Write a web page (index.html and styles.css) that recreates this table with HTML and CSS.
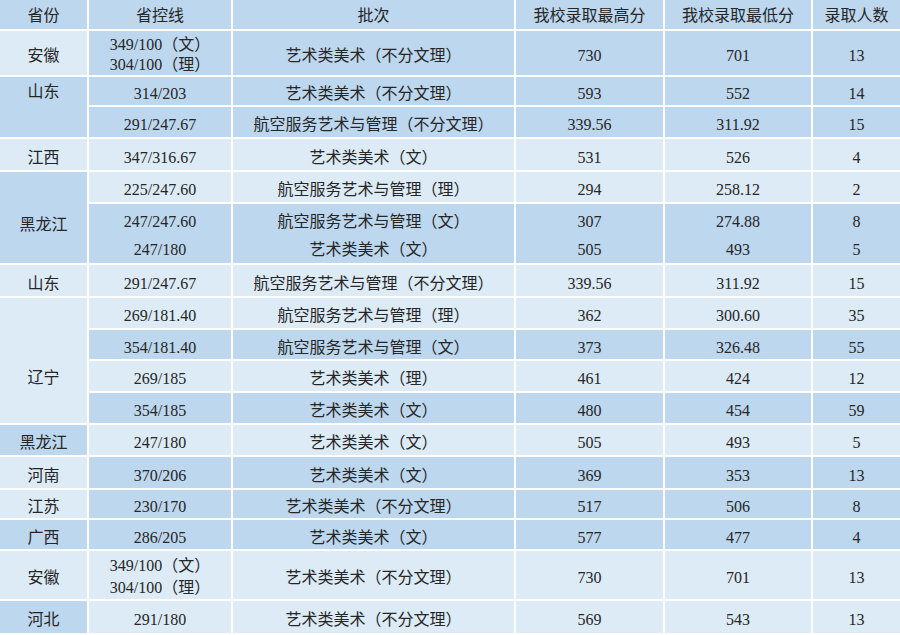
FILE: index.html
```html
<!DOCTYPE html>
<html lang="zh-CN">
<head>
<meta charset="utf-8">
<title>录取分数</title>
<link rel="stylesheet" href="styles.css">
</head>
<body>
<div class="frame">
<table class="scores">
<colgroup>
<col class="c-prov"><col class="c-line"><col class="c-batch"><col class="c-max"><col class="c-min"><col class="c-num">
</colgroup>
<thead>
<tr class="h31"><th>省份</th><th>省控线</th><th>批次</th><th>我校录取最高分</th><th>我校录取最低分</th><th>录取人数</th></tr>
</thead>
<tbody>
<tr class="h46"><td class="l">安徽</td><td class="m two">349/100（文）<br>304/100（理）</td><td class="m">艺术类美术（不分文理）</td><td class="m">730</td><td class="m">701</td><td class="m">13</td></tr>
<tr class="h30"><td class="m top sd" rowspan="2">山东</td><td class="m">314/203</td><td class="m">艺术类美术（不分文理）</td><td class="m">593</td><td class="m">552</td><td class="m">14</td></tr>
<tr class="h32"><td class="m">291/247.67</td><td class="m">航空服务艺术与管理（不分文理）</td><td class="m">339.56</td><td class="m">311.92</td><td class="m">15</td></tr>
<tr class="h33"><td class="l">江西</td><td class="l">347/316.67</td><td class="l">艺术类美术（文）</td><td class="l">531</td><td class="l">526</td><td class="l">4</td></tr>
<tr class="h32"><td class="m top hlj" rowspan="2">黑龙江</td><td class="l">225/247.60</td><td class="l">航空服务艺术与管理（理）</td><td class="l">294</td><td class="l">258.12</td><td class="l">2</td></tr>
<tr class="h61"><td class="m pair">247/247.60<br>247/180</td><td class="m pair">航空服务艺术与管理（文）<br>艺术类美术（文）</td><td class="m pair">307<br>505</td><td class="m pair">274.88<br>493</td><td class="m pair">8<br>5</td></tr>
<tr class="h33"><td class="l">山东</td><td class="l">291/247.67</td><td class="l">航空服务艺术与管理（不分文理）</td><td class="l">339.56</td><td class="l">311.92</td><td class="l">15</td></tr>
<tr class="h32"><td class="l top ln" rowspan="4">辽宁</td><td class="l">269/181.40</td><td class="l">航空服务艺术与管理（理）</td><td class="l">362</td><td class="l">300.60</td><td class="l">35</td></tr>
<tr class="h31"><td class="m">354/181.40</td><td class="m">航空服务艺术与管理（文）</td><td class="m">373</td><td class="m">326.48</td><td class="m">55</td></tr>
<tr class="h32"><td class="l">269/185</td><td class="l">艺术类美术（理）</td><td class="l">461</td><td class="l">424</td><td class="l">12</td></tr>
<tr class="h32"><td class="m">354/185</td><td class="m">艺术类美术（文）</td><td class="m">480</td><td class="m">454</td><td class="m">59</td></tr>
<tr class="h32"><td class="m">黑龙江</td><td class="l">247/180</td><td class="l">艺术类美术（文）</td><td class="l">505</td><td class="l">493</td><td class="l">5</td></tr>
<tr class="h33"><td class="l">河南</td><td class="m">370/206</td><td class="m">艺术类美术（文）</td><td class="m">369</td><td class="m">353</td><td class="m">13</td></tr>
<tr class="h30"><td class="l">江苏</td><td class="m">230/170</td><td class="m">艺术类美术（不分文理）</td><td class="m">517</td><td class="m">506</td><td class="m">8</td></tr>
<tr class="h31"><td class="m">广西</td><td class="m">286/205</td><td class="m">艺术类美术（文）</td><td class="m">577</td><td class="m">477</td><td class="m">4</td></tr>
<tr class="h50"><td class="l">安徽</td><td class="l two2">349/100（文）<br>304/100（理）</td><td class="l">艺术类美术（不分文理）</td><td class="l">730</td><td class="l">701</td><td class="l">13</td></tr>
<tr class="h34"><td class="m">河北</td><td class="l">291/180</td><td class="l">艺术类美术（不分文理）</td><td class="l">569</td><td class="l">543</td><td class="l">13</td></tr>
</tbody>
</table>
</div>
</body>
</html>
```
FILE: styles.css
```css
html, body {
  margin: 0;
  padding: 0;
  background: #ffffff;
}

.frame {
  width: 900px;
  height: 635px;
  overflow: hidden;
}

.scores {
  table-layout: fixed;
  width: 904px;
  margin: -2px 0 0 -2px;
  border-collapse: separate;
  border-spacing: 2px;
  font-family: "Liberation Serif", "Noto Sans CJK SC", serif;
  font-size: 16px;
  color: #262626;
}

.c-prov { width: 87px; }
.c-line { width: 142px; }
.c-batch { width: 281px; }
.c-max { width: 147px; }
.c-min { width: 146px; }
.c-num { width: 87px; }

.scores th,
.scores td {
  padding: 6px 0 0;
  border: 0;
  text-align: center;
  vertical-align: middle;
  font-weight: normal;
  white-space: nowrap;
}

.scores th {
  background: #bdd7ee;
  padding-top: 2px;
}

.m { background: #bdd7ee; }
.l { background: #ddebf7; }

.h31 > th { line-height: 27px; }
.h30 > td { line-height: 22px; }
.h31 > td { line-height: 23px; }
.h32 > td { line-height: 24px; }
.h33 > td { line-height: 25px; }
.h34 > td { line-height: 26px; }
.h46 > td { line-height: 38px; }
.h50 > td { line-height: 42px; }

.scores .h46 > td.two { line-height: 20px; padding-top: 4px; }
.scores .h50 > td.two2 { line-height: 22px; padding-top: 4px; }
.scores .h61 > td.pair { line-height: 27.5px; padding-top: 4px; }

.scores td.top { vertical-align: top; }
.scores td.sd { padding-top: 4px; }
.scores td.hlj { padding-top: 41px; }
.scores td.ln { padding-top: 68px; }
```
